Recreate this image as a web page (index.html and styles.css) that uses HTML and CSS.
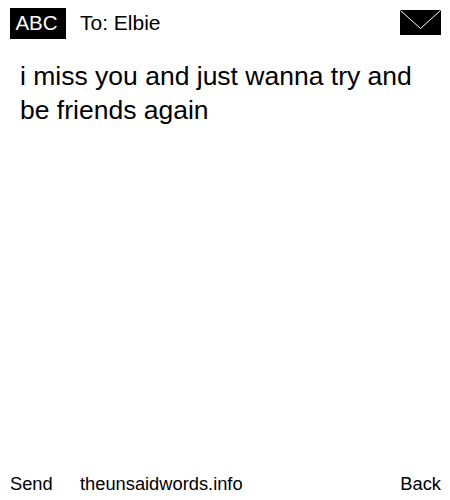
FILE: index.html
```html
<!DOCTYPE html>
<html lang="en">
<head>
    <meta charset="UTF-8">
    <title>The Unsaid Words</title>
    <link rel="stylesheet" href="styles.css">
</head>
<body>
    <div class="phone">
        <div class="header">
            <div class="mode">ABC</div>
            <div class="to">To: Elbie</div>
            <svg class="envelope" width="41" height="25" viewBox="0 0 41 25">
                <rect width="41" height="25" fill="#000"/>
                <path d="M0.5 0.5 L20.5 18.5 L40.5 0.5" fill="none" stroke="#fff" stroke-width="1"/>
            </svg>
        </div>
        <div class="message">i miss you and just wanna try and be friends again</div>
        <div class="footer">
            <span class="send">Send</span>
            <span class="site">theunsaidwords.info</span>
            <span class="back">Back</span>
        </div>
    </div>
</body>
</html>
```

FILE: styles.css
```css
body {
    margin: 0;
    background-color: #fff;
    color: #000;
    font-family: "Liberation Sans", Arial, sans-serif;
}

.phone {
    display: flex;
    flex-direction: column;
    width: 450px;
    height: 500px;
    box-sizing: border-box;
    padding: 8px 10px 6px;
}

.header {
    display: flex;
    align-items: center;
    font-size: 21px;
}

.mode {
    background-color: #000;
    color: #fff;
    box-sizing: border-box;
    width: 56px;
    height: 31px;
    padding-right: 3px;
    font-size: 20.5px;
    line-height: 29px;
    text-align: center;
}

.to {
    flex: 1;
    margin-left: 14px;
    margin-top: -1px;
}

.envelope {
    margin-right: -1px;
    margin-top: -3px;
}

.message {
    flex: 1;
    width: 410px;
    margin-top: 20px;
    padding-left: 10px;
    font-size: 26.5px;
    line-height: 34px;
}

.footer {
    display: flex;
    font-size: 18.3px;
    line-height: 21px;
}

.send {
    width: 70px;
}

.site {
    flex: 1;
}

.back {
    margin-right: -1px;
}
```
